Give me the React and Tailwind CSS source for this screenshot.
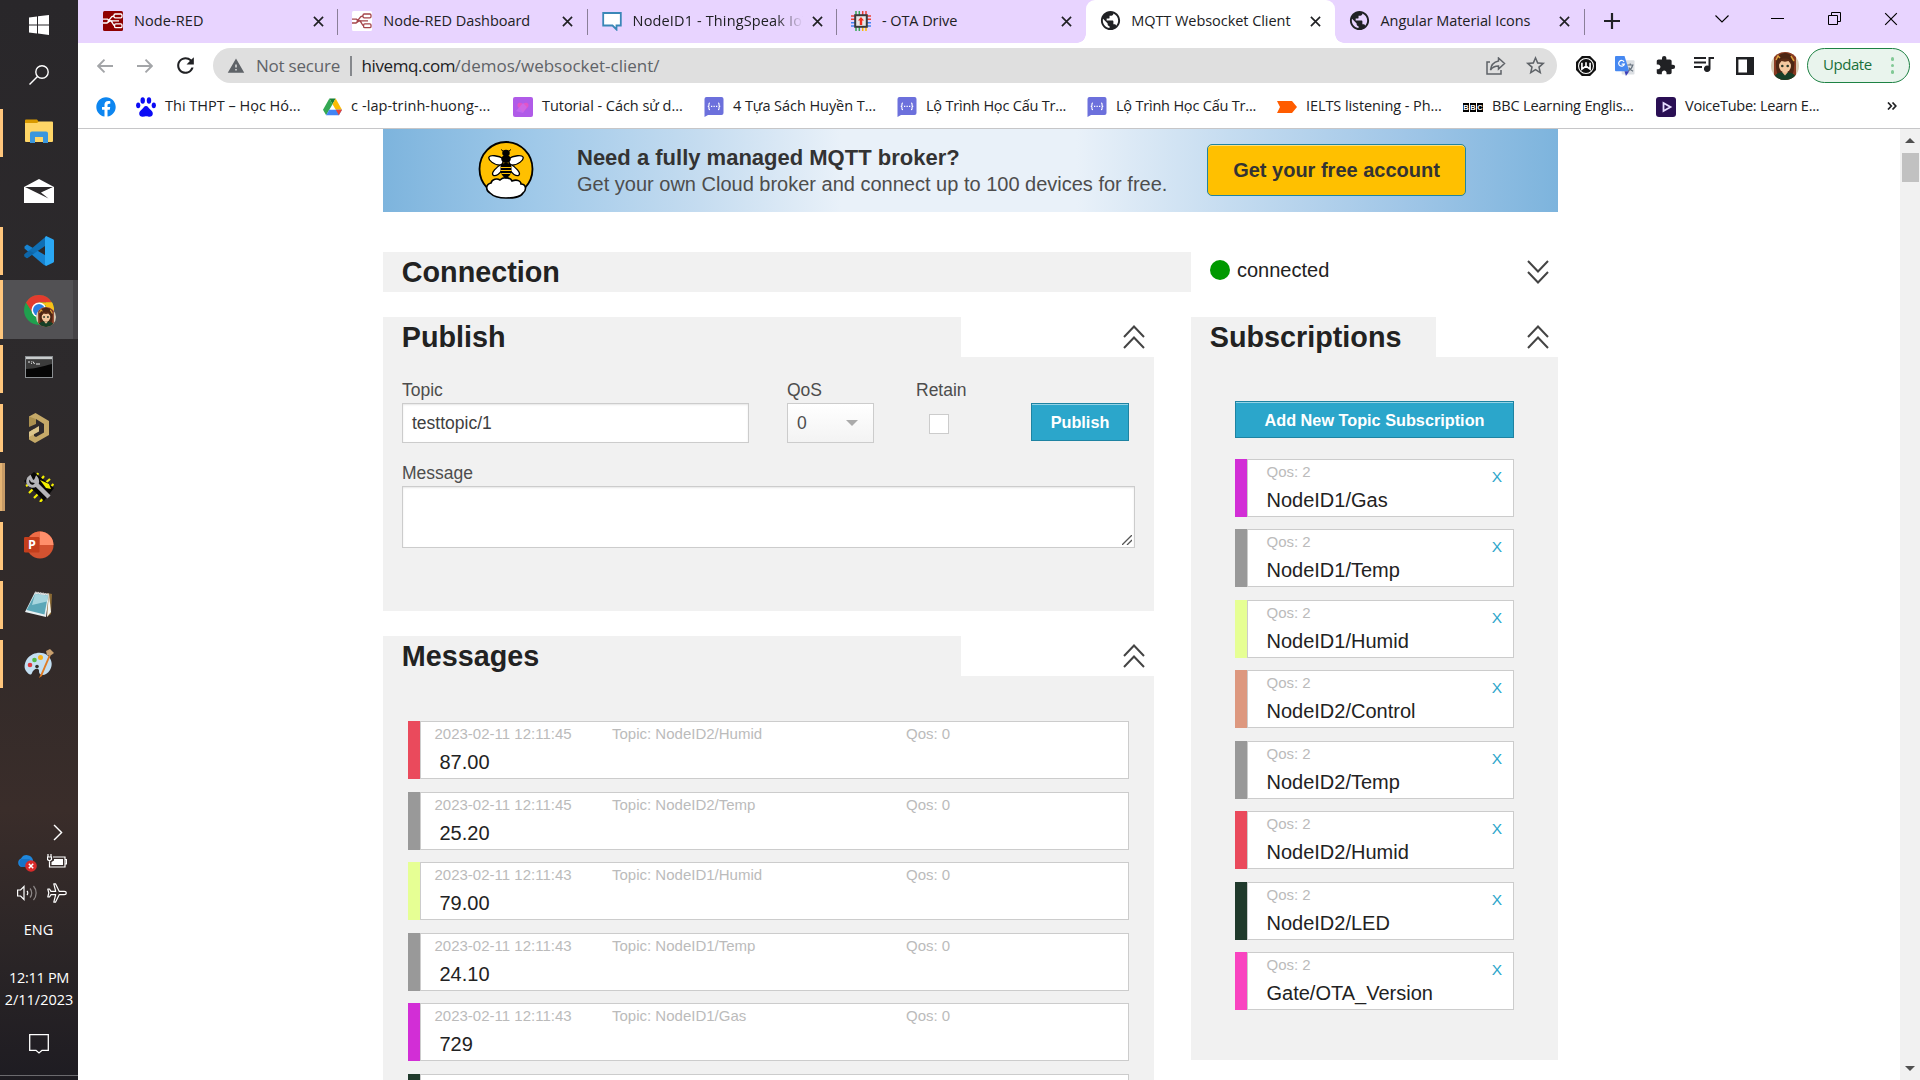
import React from "react";
import { FaFacebook } from "react-icons/fa";
import { MdPublic, MdExtension, MdRefresh, MdStarBorder, MdWarning } from "react-icons/md";

/* ---------- small icons ---------- */

const Cross = ({ className = "", w = 1.8 }) => (
  <svg viewBox="0 0 12 12" className={className} fill="none" stroke="currentColor" strokeWidth={w}>
    <path d="M1 1l10 10M11 1L1 11" />
  </svg>
);

const NodeRed = ({ bg, fg }) => (
  <svg viewBox="0 0 20 20" className="h-5 w-5">
    <rect width="20" height="20" rx="1.5" fill={bg} />
    <g fill="none" stroke={fg} strokeWidth="1.3">
      <rect x="11" y="3" width="8" height="3.8" rx="1.2" />
      <rect x="11.6" y="12.8" width="7.4" height="3.8" rx="1.2" />
      <path d="M0 8.2h4.5l1.5 1 M0 12h4l3-2 M11 5c-4 0-3.5 4-6.5 5.6 M6 9.6c4.500 0 3 5 6 5 M7 9.600c4 .6 6 .3 9 .3" />
    </g>
  </svg>
);

const Speech = () => (
  <svg viewBox="0 0 20 20" className="h-5 w-5">
    <path d="M1.200 2h17.600v12.500h-4.300v4l-4-4H1.200z" fill="#fff" stroke="#3a87b7" strokeWidth="1.8" />
  </svg>
);

const Chip = () => (
  <svg viewBox="0 0 20 20" className="h-5 w-5">
    <g strokeWidth="1.500">
      <path d="M5 0v4M8.300 0v4" stroke="#34a853" /><path d="M11.700 0v4M15 0v4" stroke="#ea4335" />
      <path d="M5 16v4M8.300 16v4" stroke="#34a853" /><path d="M11.700 16v4M15 16v4" stroke="#fbbc04" />
      <path d="M0 5h4M0 8.300h4M16 5h4M16 8.300h4" stroke="#ea4335" />
      <path d="M0 11.700h4M0 15h4M16 11.700h4M16 15h4" stroke="#4285f4" />
    </g>
    <rect x="4.200" y="4.200" width="11.600" height="11.600" fill="#e8e8e8" stroke="#3b3b3b" strokeWidth="2" />
    <path d="M10 6l3 3.500h-1.800V14H8.800V9.500H7z" fill="#f22d1d" />
  </svg>
);

const Globe = () => <MdPublic className="-m-0.5 h-[23px] w-[23px] text-[#202124]" />;

const Paw = () => (
  <svg viewBox="0 0 20 20" className="h-5 w-5" fill="#0b0bf5">
    <ellipse cx="6.700" cy="3.500" rx="2.200" ry="3.200" /><ellipse cx="13" cy="3.500" rx="2.200" ry="3.200" />
    <ellipse cx="2.200" cy="8.300" rx="2.100" ry="2.900" /><ellipse cx="17.800" cy="8.300" rx="2.100" ry="2.900" />
    <path d="M10 9c-2 0-2.500 2-4 3.300C4.500 13.600 3.200 14.700 3.200 16.700c0 2.200 1.800 3.200 3.800 3C8.800 19.500 9 19.200 10 19.200s1.200.3 3 .5c2 .2 3.800-.8 3.800-3 0-2-1.300-3.100-2.800-4.400C12.500 11 12 9 10 9z" />
  </svg>
);

const Drive = () => (
  <svg viewBox="0 0 20 18" className="h-[18px] w-[19px]">
    <path d="M6.700 0h6.600L10 6z" fill="#188038" />
    <path d="M6.700 0L0 12l3.300 5.800L10 6z" fill="#34a853" />
    <path d="M13.300 0L20 12h-6.500L10 6z" fill="#fbbc04" />
    <path d="M6.500 12H20l-3.300 5.800H3.300z" fill="#4285f4" />
    <path d="M13.500 12H20l-3.300 5.800z" fill="#ea4335" />
  </svg>
);

const Heart = () => (
  <svg viewBox="0 0 20 20" className="h-5 w-5">
    <rect width="20" height="20" rx="2" fill="#b05be8" />
    <path d="M10 15L5 10c-2-3 1.500-6 5-3 3.500-3 7 0 5 3z" fill="#e255c8" />
    <path d="M3 14l7-8 4 4-4 6z" fill="#c86df0" opacity=".7" />
  </svg>
);

const Braces = () => (
  <svg viewBox="0 0 20 20" className="h-5 w-5">
    <path d="M2.500 0h15A2 2 0 0 1 19.500 2v14a2 2 0 0 1-2 2H4L.5 20V2a2 2 0 0 1 2-2z" fill="#6c70dc" />
    <path d="M6 6c-1.500 0-1 1.500-1 2.200S4.700 9.300 3.700 9.300c1 0 1.300.4 1.300 1.100S4.500 12.600 6 12.600M14 6c1.500 0 1 1.500 1 2.200s.3 1.100 1.300 1.100c-1 0-1.300.4-1.300 1.100s.5 2.200-1 2.200" fill="none" stroke="#fff" strokeWidth="1.100" />
    <path d="M7 9.300h6.500" stroke="#fff" strokeWidth="1.300" strokeDasharray="1.300 1.200" />
  </svg>
);

const OrangeTag = () => (
  <svg viewBox="0 0 20 12" className="h-3 w-5"><path d="M0 0h15l5 6-5 6H0l3-6z" fill="#ff5c00" /></svg>
);

const Bbc = () => (
  <span className="flex w-5 gap-px font-['Liberation_Sans',sans-serif] text-[7.5px] font-bold leading-[9px] text-white">
    <span className="w-1.5 bg-black text-center">B</span><span className="w-1.5 bg-black text-center">B</span><span className="w-1.5 bg-black text-center">C</span>
  </span>
);

const VoiceTube = () => (
  <svg viewBox="0 0 20 20" className="h-5 w-5">
    <rect width="20" height="20" rx="3" fill="#2a0f54" />
    <path d="M7.500 6l7 4-7 4z" fill="none" stroke="#e6dcff" strokeWidth="1.800" />
  </svg>
);

const Avatar = ({ className }) => (
  <svg viewBox="0 0 28 28" className={className}>
    <defs><clipPath id="face"><circle cx="14" cy="14" r="14" /></clipPath></defs>
    <g clipPath="url(#face)">
      <rect width="28" height="28" fill="#d9cbb4" />
      <path d="M3 0h22v28H3z" fill="#8a3a22" />
      <path d="M5 14C4 4 10 1 14 1s11 3 9 14c0 6-2 8-2 8H7s-2-4-2-9z" fill="#4c2614" />
      <path d="M5 8l2-4 2 2M20 4l3 5" stroke="#e0a33c" strokeWidth="1.500" fill="none" />
      <ellipse cx="14" cy="14" rx="6" ry="6.500" fill="#f4c9a0" />
      <path d="M7.500 12.500c1-6 4-6 6.500-6s5.500 0 6.500 6l-3-3.500-3.500.8-3.500-.8z" fill="#5b2d16" />
      <circle cx="11.300" cy="14" r="1.300" fill="#2b3b2a" /><circle cx="16.700" cy="14" r="1.300" fill="#2b3b2a" />
      <path d="M2 28c1-6 6-8 12-8s11 2 12 8z" fill="#163f27" />
      <path d="M11 20l3 3.500 3-3.500z" fill="#f0b98e" />
    </g>
  </svg>
);

/* ---------- taskbar ---------- */

const tasks = [
  { id: "explorer", open: true, icon: (
    <svg viewBox="0 0 28 24" className="-mt-1 h-6 w-7">
      <path d="M0 1.500A1 1 0 0 1 1 .5h11l2 2.500v2H0z" fill="#d99a00" />
      <path d="M0 4h12l2-1.500h13a1 1 0 0 1 1 1V22a1 1 0 0 1-1 1H1a1 1 0 0 1-1-1z" fill="#ffd667" />
      <path d="M5 24V14.500a2 2 0 0 1 2-2h14a2 2 0 0 1 2 2V24h-5v-6h-8v6z" fill="#3a96dd" />
    </svg>) },
  { id: "mail", open: false, icon: (
    <svg viewBox="0 0 30 24" className="-mt-0.5 h-6 w-[30px]">
      <path d="M0 8L15 0l15 8v16H0z" fill="#fff" />
      <path d="M1 8h28L17 13.500l7.500 6z" fill="#2d2a2c" />
      <path d="M17 14l13-6v4z" fill="#fff" opacity=".9" />
    </svg>) },
  { id: "vscode", open: true, icon: (
    <svg viewBox="0 0 30 30" className="h-[30px] w-[30px]">
      <path d="M3 8.500L0.500 10.500v2L20 29l2.500 1V20z" fill="#1783d1" />
      <path d="M22.500 0L0.500 18.500v2L3 22.300 22.500 9z" fill="#0f6fb5" />
      <path d="M3 22.300L0.500 20.300v-2L5 14.500l5 2.500z" fill="#0e66a8" />
      <path d="M22 0l7 3.200a1.500 1.500 0 0 1 1 1.300v21a1.500 1.500 0 0 1-1 1.300L22 30l-1-1.500V1.500z" fill="#2aa7f4" />
    </svg>) },
  { id: "chrome", open: true, active: true, icon: (
    <div className="relative h-[30px] w-[30px]">
      <svg viewBox="0 0 30 30" className="h-[30px] w-[30px]">
        <circle cx="15" cy="15" r="15" fill="#1fa04e" />
        <path d="M2 7.500A15 15 0 0 1 28 7.500H15L9 18.500z" fill="#e33b2e" />
        <path d="M28 7.500A15 15 0 0 1 15 30l6.500-11.500L22 7.500z" fill="#fbc116" />
        <path d="M15 7.500h13l1 3H15z" fill="#fbc116" />
        <circle cx="15" cy="15" r="7.500" fill="#fff" /><circle cx="15" cy="15" r="6" fill="#2a7de1" />
      </svg>
      <Avatar className="absolute -bottom-0.5 -right-0.5 h-5 w-5" />
    </div>) },
  { id: "terminal", open: true, icon: (
    <svg viewBox="0 0 28 22" className="-mt-1 h-[22px] w-7">
      <rect x=".5" y=".5" width="27" height="21" fill="#050505" stroke="#8b8f92" />
      <path d="M1 1h26v2.500H1z" fill="#c9cccd" /><path d="M1 13C10 13 18 10 27 8V3.500H1z" fill="#3b3b3b" />
      <path d="M3 6h2M6.500 5.500v.8M6.500 7v.8M8 5.500l1.500 2.500M11 8h4" stroke="#fff" strokeWidth=".9" />
    </svg>) },
  { id: "altium", open: true, icon: (
    <svg viewBox="0 0 20 30" className="h-[30px] w-5">
      <path d="M0 3.500L6.500 0 20 8v14L6 30l-6-3.500V19l5-3v7l2 1 8-4.500V11L7 6 0 10.500z" fill="#c5a968" />
      <path d="M0 19l10-6v5.500L0 24z" fill="#dcc68c" />
      <path d="M0 3.500l7 2.500v5L0 14z" fill="#ab904f" />
    </svg>) },
  { id: "flasher", open: true, stacked: true, icon: (
    <svg viewBox="0 0 30 30" className="h-[30px] w-[30px]">
      <g stroke="#f4f000" strokeWidth="2.200"><path d="M14 1l-2 5M20 4l-4 5M26 7l-7 6M29.500 12l-6 6M2 14l5-3M5 21l5-5M10 26l5-5M16 30l4-5" /></g>
      <path d="M0 9L10 0l20 16-10 13z" fill="#070707" />
      <path d="M16 8l9 4 2 5-5-1z" fill="#f4f000" />
      <path d="M11 11L25 25" stroke="#b4b4b8" strokeWidth="4.500" />
      <path d="M6 5a5 5 0 1 0 6.500 1l-1.500 3.500-3-.5z" fill="none" stroke="#b4b4b8" strokeWidth="3" />
    </svg>) },
  { id: "powerpoint", open: true, icon: (
    <svg viewBox="0 0 30 28" className="-mt-0.5 h-7 w-[30px]">
      <circle cx="16" cy="14" r="13.500" fill="#d35230" />
      <path d="M16 .5V14H2.500A13.500 13.500 0 0 1 16 .5z" fill="#ed6c47" /><path d="M16 .5A13.500 13.500 0 0 1 29.500 14H16z" fill="#ff8f6b" />
      <rect x="0" y="6" width="15.500" height="15.500" rx="1.200" fill="#c43e1c" />
      <text x="4" y="18.300" fontSize="12.500" fontWeight="700" fill="#fff" className="font-['Open_Sans',sans-serif]">P</text>
    </svg>) },
  { id: "notepad", open: true, icon: (
    <svg viewBox="0 0 28 27" className="h-[27px] w-7">
      <path d="M22 2l5 1-1 20-4 3z" fill="#8a6a34" /><path d="M24 3l2 18-4 5z" fill="#f5f5f0" />
      <path d="M10 1l14 2-3 23-21-5z" fill="#e8f0f2" /><path d="M10 3l13 1.500-3.500 19L1.500 19z" fill="#5ba7b8" />
      <path d="M10 3l13 1.500-1 6L7 14z" fill="#a6d5de" />
      <path d="M10 1.500l14 2" stroke="#c8c8c8" strokeWidth="2" strokeDasharray="1.500 1" />
    </svg>) },
  { id: "paint", open: true, icon: (
    <svg viewBox="0 0 30 30" className="h-[30px] w-[30px]">
      <path d="M3 10C8 3 18 2 23 6s6 10 3 15-8 6-10 4 0-4-2-5-5 1-6 4-4 1-6-2-2-7 1-12z" fill="#c3dff2" />
      <circle cx="6" cy="16" r="2.300" fill="#e0393f" /><circle cx="10.500" cy="11" r="2.300" fill="#57b947" /><circle cx="16.500" cy="8.500" r="2.500" fill="#f6b21b" />
      <circle cx="13" cy="17.500" r="1.800" fill="#34302f" />
      <path d="M25 6l1.500 1L18 27l-3 2z" fill="#e07b24" /><path d="M22 2l4-2 4 4-4 3-3-1z" fill="#c9a06e" />
    </svg>) },
];

const Taskbar = () => (
  <aside className="flex h-full w-[78px] shrink-0 flex-col bg-[linear-gradient(180deg,#29272a_0%,#2d2a2c_35%,#322a29_60%,#3a2d2a_75%,#2c2627_87%,#1e1c22_100%)] font-['Open_Sans',sans-serif] text-white">
    <div className="flex h-[50px] items-center justify-center">
      <svg viewBox="0 0 20 20" className="h-5 w-5" fill="#fff"><path d="M0 2.600L8 1.500v8H0zM9 1.300L20 0v9.500H9zM0 10.500h8v8l-8-1.100zM9 10.500h11V20L9 18.600z" /></svg>
    </div>
    <div className="flex h-[53px] items-center justify-center">
      <svg viewBox="0 0 20 20" className="-mt-1 h-5 w-5" fill="none" stroke="#fff" strokeWidth="1.400"><circle cx="13" cy="7" r="6.200" /><path d="M8.500 11.500L.5 19.500" /></svg>
    </div>
    {tasks.map((t) => (
      <div key={t.id} className={t.active ? "relative flex h-[59px] items-center justify-center border-r-[5px] border-[#454346] bg-[#525154] pl-[5px]" : "relative flex h-[59px] items-center justify-center"}>
        {t.active && <span className="absolute left-0 top-0 h-full w-[3px] bg-[#ffc67c]" />}
        {t.open && !t.active && !t.stacked && <span className="absolute left-0 top-[6px] h-12 w-[3px] bg-[#ffc67c]" />}
        {t.stacked && <span className="absolute left-0 top-[6px] h-12 w-[5px] border-r-[3px] border-[#c79b66] bg-[#e5b474]" />}
        {t.icon}
      </div>
    ))}
    <div className="mt-auto flex flex-col pb-1">
      <svg viewBox="0 0 10 18" className="ml-[53px] h-[17px] w-2.5" fill="none" stroke="#fff" strokeWidth="1.500"><path d="M.8 1l8 8-8 8" /></svg>
      <div className="mt-[11px] flex h-[22px] items-center gap-2.5 pl-[17px]">
        <svg viewBox="0 0 20 18" className="h-[18px] w-5">
          <path d="M4.500 13a4.500 4.500 0 0 1-.5-8.500A6.500 6.500 0 0 1 16 6v7z" fill="#1f87dd" /><path d="M4 5A5.500 5.500 0 0 0 4.500 13H9L13 5z" fill="#1673c8" />
          <circle cx="14" cy="12" r="5.800" fill="#d92a2a" /><path d="M11.800 9.800l4.400 4.400M16.200 9.800l-4.400 4.400" stroke="#fff" strokeWidth="1.500" />
        </svg>
        <svg viewBox="0 0 20 14" className="-mt-1 h-3.5 w-5" fill="none" stroke="#fff" strokeWidth="1.200"><path d="M6 3h12v10H2.500V7M18.500 5.500h1v4.500h-1M1 0v2.500M4 0v2.500M.5 3h4v2.500l-2 1.500-2-1.500z" /><path d="M7 5h9v6H4.500V8L7 6.500z" fill="#fff" stroke="none" /></svg>
      </div>
      <div className="mt-[7px] flex h-[24px] items-center gap-2.5 pl-[17px]">
        <svg viewBox="0 0 20 18" className="h-[18px] w-5" fill="none" stroke="#fff" strokeWidth="1.200"><path d="M.6 6h3L7 2.500v13L3.600 12h-3z" /><path d="M10 7c1 1 1 3 0 4" /><path d="M13 4.500c2.300 2.500 2.300 6.500 0 9M16.500 2c3.500 4 3.500 10 0 14" opacity=".45" /></svg>
        <svg viewBox="0 0 20 20" className="h-5 w-5" fill="none" stroke="#fff" strokeWidth="1.200" strokeLinejoin="round"><path d="M19.300 10c0-1-1-1.600-2-1.600h-5L8.500.8H6.800l1.900 7.600H4L2.500 6H.8l1 4-1 4h1.700L4 11.600h4.700l-1.900 7.600h1.700l3.800-7.600h5c1 0 2-.6 2-1.600z" /></svg>
      </div>
      <div className="mt-[14px] pr-px text-center text-[14.5px] leading-[22px]">ENG</div>
      <div className="mt-[26px] text-center text-[14.5px] leading-[22px] tracking-[-0.3px]">12:11 PM</div>
      <div className="text-center text-[14.5px] leading-[22px]">2/11/2023</div>
      <svg viewBox="0 0 20 20" className="mx-auto mt-[23px] h-5 w-5" fill="none" stroke="#fff" strokeWidth="1.300"><path d="M.7.7h18.600v15.600H13l-3 2.700-3-2.700H.7z" /></svg>
      <div className="mt-[21px] h-px bg-[#6b6a6e]" />
    </div>
  </aside>
);

/* ---------- browser chrome ---------- */

const tabs = [
  { title: "Node-RED", icon: <NodeRed bg="#8f0000" fg="#fff" />, track: "tracking-[0.1px]" },
  { title: "Node-RED Dashboard", icon: <NodeRed bg="#fff" fg="#a5454b" />, track: "tracking-[-0.03px]" },
  { title: "NodeID1 - ThingSpeak IoT", icon: <Speech />, track: "tracking-[0.14px]", fade: true },
  { title: "- OTA Drive", icon: <Chip />, track: "tracking-[-0.06px]", last: true },
  { title: "MQTT Websocket Client", icon: <Globe />, track: "tracking-[-0.05px]", active: true },
  { title: "Angular Material Icons", icon: <Globe />, track: "tracking-[-0.06px]" },
];

const Tab = ({ t }) => (
  <div className={t.active
    ? "relative flex h-[43px] w-[249.3px] items-center rounded-t-[9px] bg-white pl-3.5 before:absolute before:-left-[9px] before:bottom-0 before:h-[9px] before:w-[9px] before:bg-[radial-gradient(circle_at_0_0,#e8d4ff_8.5px,white_9px)] after:absolute after:-right-[9px] after:bottom-0 after:h-[9px] after:w-[9px] after:bg-[radial-gradient(circle_at_100%_0,#e8d4ff_8.5px,white_9px)]"
    : "relative flex h-[43px] w-[249.3px] items-center pl-3.5"}>
    <span className="-mt-0.5 flex w-5 justify-center">{t.icon}</span>
    <span className={`-mt-0.5 ml-[11px] w-[170px] overflow-hidden whitespace-nowrap text-[14.5px] leading-[22px] ${t.track} ${t.fade ? "[mask-image:linear-gradient(90deg,#000_84%,transparent_100%)]" : ""}`}>{t.title}</span>
    <Cross className="-mt-px ml-[9px] h-[11px] w-[11px] text-[#202124]" />
    {!t.active && !t.last && <span className="ml-auto h-[26px] w-px bg-[#8a7f98]" />}
  </div>
);

const TabStrip = () => (
  <div className="flex h-[43px] items-center bg-[#e8d4ff] pl-[11px]">
    {tabs.map((t) => <Tab key={t.title} t={t} />)}
    <svg viewBox="0 0 16 16" className="-mt-px ml-[19px] h-4 w-4" stroke="#202124" strokeWidth="2.200"><path d="M8 0v16M0 8h16" /></svg>
    <div className="-mt-1.5 ml-auto flex items-center pr-[22px] text-black">
      <svg viewBox="0 0 14 8" className="mr-[42px] h-2 w-3.5" fill="none" stroke="currentColor" strokeWidth="1.100"><path d="M.5.5L7 7 13.500.5" /></svg>
      <span className="mr-[44px] h-px w-[13px] bg-black" />
      <svg viewBox="0 0 13 13" className="mr-[43px] h-[13px] w-[13px]" fill="none" stroke="currentColor"><path d="M.5 3.500h9v9h-9zM3.500 3V.5h9v9H10" /></svg>
      <Cross className="h-[14px] w-[14px]" w={1} />
    </div>
  </div>
);

const Toolbar = () => (
  <div className="flex h-[45px] items-center pl-[19px] text-[17px]">
    <svg viewBox="0 0 16 14" className="h-3.5 w-4" fill="none" stroke="#a3a5a8" strokeWidth="1.900"><path d="M7.500.7L1.200 7l6.300 6.300M1.200 7H16" /></svg>
    <svg viewBox="0 0 16 14" className="ml-6 h-3.5 w-4" fill="none" stroke="#a3a5a8" strokeWidth="1.900"><path d="M8.500.7L14.800 7l-6.300 6.300M14.800 7H0" /></svg>
    <MdRefresh className="ml-5 h-[25px] w-[25px] text-[#202124]" />
    <div className="ml-[15px] flex h-[35px] w-[1344px] items-center rounded-full bg-[#dfdfdf] pl-3.5 text-[#5f6368]">
      <MdWarning className="h-[18px] w-[18px]" />
      <span className="ml-[11px] w-[94px] leading-6 tracking-[-0.22px]">Not secure</span>
      <span className="h-5 w-[1.500px] bg-[#85888c]" />
      <span className="ml-[10px] w-[93px] whitespace-nowrap leading-6 tracking-[-0.38px] text-[#202124]">hivemq.com</span>
      <span className="whitespace-nowrap leading-6">/demos/websocket-client/</span>
      <svg viewBox="0 0 20 18" className="ml-auto h-[18px] w-5" fill="none" stroke="#5f6368" strokeWidth="1.500"><path d="M4 5H1v12h14v-4M12.500 1l6 5.500-6 5.500V9c-3.500 0-6 1-8 4 .5-5 3.500-8 8-9z" /></svg>
      <MdStarBorder className="ml-[18px] mr-2.5 h-[23px] w-[23px]" />
    </div>
    <svg viewBox="0 0 22 22" className="ml-[19px] h-5 w-5"><path d="M6.500 0h9L22 6.500v9L15.500 22h-9L0 15.500v-9z" fill="#111" /><circle cx="11" cy="11" r="8.200" fill="none" stroke="#fff" strokeWidth="1.200" /><path d="M6.500 7.500v7l4.500-3.500 4.500 3.500v-7M11 7v4" fill="none" stroke="#fff" strokeWidth="1.800" /></svg>
    <svg viewBox="0 0 21 21" className="ml-[19px] h-5 w-5"><rect x="7" y="4.500" width="13.500" height="15" rx="1" fill="#dcdfe3" /><path d="M1 0h9l5 16H1a1 1 0 0 1-1-1V1a1 1 0 0 1 1-1z" fill="#4688f1" /><path d="M10 16h5l-3.500 5z" fill="#3b3fb8" /><path d="M9.500 6.200A3 3 0 1 0 9.800 8.500H7" fill="none" stroke="#fff" strokeWidth="1.300" /><path d="M13 9.500h6.500M16 8v1.500M18.500 9.500c-.5 3-2.500 5-4.500 6M14.500 12c1 2 2.500 3 4.500 4" fill="none" stroke="#66727e" strokeWidth="1.200" /></svg>
    <MdExtension className="ml-[20px] h-[21px] w-[21px] text-[#202124]" />
    <svg viewBox="0 0 21 17" className="-mt-0.5 ml-[18px] h-[17px] w-[21px]" fill="#202124"><path d="M0 1h12v2H0zM0 5.500h12v2H0zM0 10h8v2H0zM14.500 1H20v2h-3.500v9.500a3.300 3.300 0 1 1-2-2.800z" /></svg>
    <svg viewBox="0 0 18 18" className="ml-[21px] h-[18px] w-[18px]"><path d="M1.200 1.200h15.600v15.600H1.200z" fill="none" stroke="#202124" strokeWidth="2.400" /><path d="M11 1h6v16h-6z" fill="#202124" /></svg>
    <Avatar className="ml-[17px] h-7 w-7" />
    <div className="ml-2 flex h-[35px] w-[103px] items-center rounded-full border-[1.500px] border-[#1e8244] bg-[#e9f4ed] pb-0.5 pl-[15px] text-[15px] tracking-[-0.45px] text-[#18703a]">
      Update
      <span className="ml-auto mr-[15px] mt-0.5 flex flex-col gap-[3px]"><i className="h-[3.500px] w-[3.500px] rounded-full bg-[#81c995]" /><i className="h-[3.500px] w-[3.500px] rounded-full bg-[#81c995]" /><i className="h-[3.500px] w-[3.500px] rounded-full bg-[#81c995]" /></span>
    </div>
  </div>
);

const bookmarks = [
  { t: "", icon: <FaFacebook className="h-5 w-5 text-[#0d86f0]" />, w: "w-10" },
  { t: "Thi THPT – Học Hó...", icon: <Paw />, w: "w-[186px]", k: "tracking-[0px]" },
  { t: "c -lap-trinh-huong-...", icon: <Drive />, w: "w-[191px]", k: "tracking-[0.1px]" },
  { t: "Tutorial - Cách sử d...", icon: <Heart />, w: "w-[191px]", k: "tracking-[-0.04px]" },
  { t: "4 Tựa Sách Huyền T...", icon: <Braces />, w: "w-[193px]", k: "tracking-[-0.06px]" },
  { t: "Lộ Trình Học Cấu Tr...", icon: <Braces />, w: "w-[190px]", k: "tracking-[-0.2px]" },
  { t: "Lộ Trình Học Cấu Tr...", icon: <Braces />, w: "w-[190px]", k: "tracking-[-0.2px]" },
  { t: "IELTS listening - Ph...", icon: <OrangeTag />, w: "w-[186px]", k: "tracking-[-0.08px]" },
  { t: "BBC Learning Englis...", icon: <Bbc />, w: "w-[193px]", k: "tracking-[-0.15px]" },
  { t: "VoiceTube: Learn E...", icon: <VoiceTube />, w: "w-[190px]", k: "tracking-[-0.24px]" },
];

const Bookmarks = () => (
  <div className="flex h-[41px] items-center border-b border-[#c6c6c8] pb-1 pl-[18px] text-[14.5px] leading-[22px]">
    {bookmarks.map((b, i) => (
      <div key={i} className={`flex shrink-0 items-center whitespace-nowrap ${b.w}`}>
        <span className="mt-0.5 flex w-5 justify-center">{b.icon}</span>
        {b.t && <span className={`ml-[9px] ${b.k}`}>{b.t}</span>}
      </div>
    ))}
    <svg viewBox="0 0 10 8" className="ml-auto mr-[23px] h-2 w-2.5" fill="none" stroke="#202124" strokeWidth="1.700"><path d="M1 .5L4.300 4 1 7.500M5.500.5L8.800 4 5.500 7.500" /></svg>
  </div>
);

/* ---------- page ---------- */

const Bee = () => (
  <svg viewBox="0 0 56 58" className="h-[58px] w-14">
    <ellipse cx="28" cy="28" rx="26.500" ry="27" fill="#ffc000" stroke="#000" strokeWidth="1.800" />
    <path d="M12 52c-5-3-4-9 1-10 1-4 6-5 9-3 4-4 11-2 12 1 5-2 9 0 9 3 5 0 6 6 2 9-3 5-11 5-17 5s-12-1-16-5z" fill="#fff" stroke="#000" strokeWidth="1.600" />
    <g stroke="#000" strokeWidth="1.300" fill="#fff">
      <path d="M26 18c-6-4-14-4-15-2s4 9 13 8zM30 18c6-4 14-4 15-2s-4 9-13 8z" />
      <path d="M24 23c-6 3-11 9-9 11s8-1 10-7zM32 23c6 3 11 9 9 11s-8-1-10-7z" />
    </g>
    <path d="M25 10l-2-1.500M31 10l2-1.500" stroke="#000" />
    <ellipse cx="28" cy="12" rx="3.800" ry="3.300" /><ellipse cx="28" cy="18" rx="4.800" ry="4" />
    <path d="M22.500 26c0-3 2-4 5.500-4s5.500 1 5.500 4v5c-1 3-4 6-5.500 7-1.500-1-4.500-4-5.500-7z" />
    <path d="M22.500 26.500h11M22.500 29.500h11M23.500 32.500h9" stroke="#ffc000" strokeWidth="1.100" />
  </svg>
);

const Banner = () => (
  <div className="flex h-[83px] w-[1175px] bg-[linear-gradient(90deg,#7db4dd_0%,#a0c9e9_13%,#c5dcf0_27%,#e9f1f9_39%,#e9f1f9_59%,#c5dcf0_72%,#a0c6e7_87%,#7db4dd_100%)]">
    <div className="ml-[95px] mt-3"><Bee /></div>
    <div className="ml-[43px] w-[630px] whitespace-nowrap pt-[15px]">
      <div className="text-[22px] font-bold leading-[27px] text-[#333]">Need a fully managed MQTT broker?</div>
      <div className="text-xl leading-[27px] text-[#4d4d4d]">Get your own Cloud broker and connect up to 100 devices for free.</div>
    </div>
    <button className="mt-[15px] h-[52px] w-[259px] rounded-[5px] border border-[#2284a1] bg-[#ffc000] text-xl font-bold text-[#333] shadow-[inset_0_1px_0_rgba(255,255,255,0.5)]">Get your free account</button>
  </div>
);

const Chevrons = ({ down = false, className = "" }) => (
  <svg viewBox="0 0 22 24" className={`h-6 w-[22px] ${down ? "rotate-180" : ""} ${className}`} fill="none" stroke="#444" strokeWidth="2">
    <path d="M1 12L11 1.500 21 12M1 23L11 12.500 21 23" />
  </svg>
);

const Heading = ({ title, w, pad }) => (
  <div className="flex h-10 items-center justify-between bg-white">
    <h3 className={`h-10 bg-[#f1f1f1] pl-[18.750px] text-[28.75px] font-bold leading-10 text-[#222] ${w}`}>{title}</h3>
    <Chevrons className={pad} />
  </div>
);

const messages = [
  ["12:11:45", "NodeID2/Humid", "87.00", "bg-[#ea4a5c]"],
  ["12:11:45", "NodeID2/Temp", "25.20", "bg-[#999]"],
  ["12:11:43", "NodeID1/Humid", "79.00", "bg-[#e6ff94]"],
  ["12:11:43", "NodeID1/Temp", "24.10", "bg-[#999]"],
  ["12:11:43", "NodeID1/Gas", "729", "bg-[#d22ed6]"],
];

const subscriptions = [
  ["NodeID1/Gas", "bg-[#d22ed6]"],
  ["NodeID1/Temp", "bg-[#999]"],
  ["NodeID1/Humid", "bg-[#e6ff94]"],
  ["NodeID2/Control", "bg-[#dd987f]"],
  ["NodeID2/Temp", "bg-[#999]"],
  ["NodeID2/Humid", "bg-[#ea4a5c]"],
  ["NodeID2/LED", "bg-[#203a2c]"],
  ["Gate/OTA_Version", "bg-[#f944c0]"],
];

const PublishForm = () => (
  <div className="h-[254px] bg-[#f1f1f1] pl-[19px] pt-5 text-[17.5px] text-[#4d4d4d]">
    <div className="flex">
      <label className="w-[385px]">
        <span className="block h-[26px] leading-[26px]">Topic</span>
        <span className="flex h-10 w-[347px] items-center border border-[#ccc] bg-white pl-[9px] text-[#404040] shadow-[inset_0_1px_2px_rgba(0,0,0,0.1)]">testtopic/1</span>
      </label>
      <label className="w-[129px]">
        <span className="block h-[26px] leading-[26px]">QoS</span>
        <span className="flex h-10 w-[87px] items-center justify-between border border-[#ccc] bg-linear-to-b from-white to-[#f3f3f3] pl-[9px] pr-[15px]">0
          <svg viewBox="0 0 12 6" className="h-1.5 w-3" fill="#aaa"><path d="M0 0h12L6 6z" /></svg>
        </span>
      </label>
      <label className="w-[115px]">
        <span className="block h-[26px] leading-[26px]">Retain</span>
        <span className="ml-[13px] mt-[11px] block h-5 w-5 border border-[#ccc] bg-white" />
      </label>
      <button className="mt-[26px] h-[38px] w-[98px] border border-[#1e83a2] bg-[#2ba6cb] text-[16.25px] font-bold text-white shadow-[inset_0_1px_0_rgba(255,255,255,0.5)]">Publish</button>
    </div>
    <label className="mt-[17px] block">
      <span className="block h-[26px] leading-[26px]">Message</span>
      <span className="flex h-[62px] w-[733px] items-end justify-end border border-[#ccc] bg-white p-0.5 shadow-[inset_0_1px_2px_rgba(0,0,0,0.1)]">
        <svg viewBox="0 0 10 10" className="h-2.5 w-2.5" stroke="#555" strokeWidth="1.300"><path d="M0 10L10 0M5 10l5-5" /></svg>
      </span>
    </label>
  </div>
);

const Page = () => (
  <div className="flex min-h-0 flex-1 bg-white font-['Liberation_Sans',Arial,sans-serif]">
    <div className="min-w-0 flex-1 overflow-hidden pl-[305px]">
      <Banner />
      <div className="mt-10 flex w-[1175px]">
        <h3 className="h-10 w-[808px] bg-[#f1f1f1] pl-[18.750px] text-[28.75px] font-bold leading-10 text-[#222]">Connection</h3>
        <div className="flex h-9 flex-1 items-center pl-[19px] text-xl text-[#222]">
          <span className="mr-[7px] h-5 w-5 rounded-full bg-[#090]" />connected
          <Chevrons down className="ml-auto mr-[9px] mt-1" />
        </div>
      </div>
      <div className="mt-[25px] flex w-[1175px] items-start">
        <div className="w-[771px]">
          <Heading title="Publish" w="w-[578px]" pad="mr-[9px]" />
          <PublishForm />
          <div className="mt-[25px]"><Heading title="Messages" w="w-[578px]" pad="mr-[9px]" /></div>
          <div className="flex h-[500px] flex-col gap-[12.5px] bg-[#f1f1f1] pl-[25px] pt-[45px]">
            {messages.map(([time, topic, value, color], i) => (
              <div key={i} className="flex h-[58px] w-[721px] shrink-0">
                <span className={`w-3 ${color}`} />
                <div className="flex-1 border border-[#ccc] bg-white">
                  <div className="flex h-6 pl-[13.500px] text-[15px] leading-6 text-[#bbb]">
                    <span className="w-[177.500px]">2023-02-11 {time}</span><span className="w-[294px]">Topic: {topic}</span><span>Qos: 0</span>
                  </div>
                  <div className="h-8 pl-[18.500px] text-xl leading-8 text-[#222]">{value}</div>
                </div>
              </div>
            ))}
            <div className="flex h-[58px] w-[721px] shrink-0">
              <span className="w-3 bg-[#203a2c]" />
              <div className="flex-1 border border-[#ccc] bg-white" />
            </div>
          </div>
        </div>
        <div className="ml-[37px] w-[367px]">
          <Heading title="Subscriptions" w="w-[245px]" pad="mr-[9px]" />
          <div className="h-[703px] bg-[#f1f1f1] pl-11 pt-11">
            <button className="block h-[37px] w-[279px] border border-[#1e83a2] bg-[#2ba6cb] pt-px text-[16.25px] font-bold text-white shadow-[inset_0_1px_0_rgba(255,255,255,0.5)]">Add New Topic Subscription</button>
            <div className="mt-[20.900px] flex flex-col gap-[12.5px]">
              {subscriptions.map(([topic, color]) => (
                <div key={topic} className="flex h-[58px] w-[279px]">
                  <span className={`w-3 ${color}`} />
                  <div className="flex flex-1 justify-between border border-[#ccc] bg-white pl-[18.500px] pr-[11px]">
                    <div>
                      <div className="h-6 text-[15px] leading-6 text-[#bbb]">Qos: 2</div>
                      <div className="h-8 text-xl leading-8 text-[#222]">{topic}</div>
                    </div>
                    <span className="pt-[5px] text-[15.5px] leading-6 text-[#2ba6cb]">X</span>
                  </div>
                </div>
              ))}
            </div>
          </div>
        </div>
      </div>
    </div>
    <div className="flex w-5 flex-col items-center bg-[#f1f1f1] py-[9px]">
      <svg viewBox="0 0 10 5" className="h-[5px] w-2.5" fill="#505050"><path d="M0 5h10L5 0z" /></svg>
      <span className="mt-[10px] h-[29px] w-[17px] bg-[#c1c1c1]" />
      <svg viewBox="0 0 10 5" className="mt-auto h-[5px] w-2.5" fill="#505050"><path d="M0 0h10L5 5z" /></svg>
    </div>
  </div>
);

export default function App() {
  return (
    <div className="flex h-[1080px] w-[1920px] overflow-hidden bg-white">
      <Taskbar />
      <div className="flex min-w-0 flex-1 flex-col">
        <div className="font-['Open_Sans',sans-serif] text-[#202124]">
          <TabStrip />
          <Toolbar />
          <Bookmarks />
        </div>
        <Page />
      </div>
    </div>
  );
}
